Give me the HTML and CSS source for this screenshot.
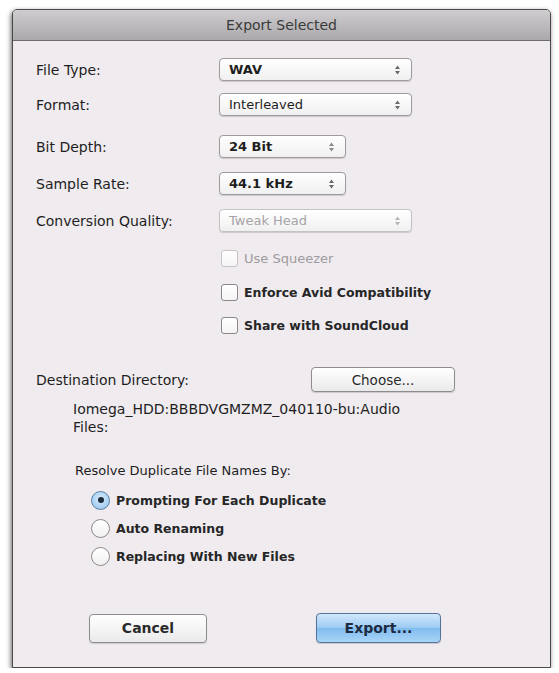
FILE: index.html
```html
<!DOCTYPE html>
<html lang="en">

<head>
    <meta charset="UTF-8">
    <meta name="viewport" content="width=device-width, initial-scale=1.0">
    <title>Export Selected</title>
    <link rel="stylesheet" href="styles.css">
</head>

<body>
    <div class="dialog">
        <div class="titlebar">Export Selected</div>

        <div class="content">
            <div class="row row-first">
                <span class="label">File Type:</span>
                <div class="select wide"><span class="value bold">WAV</span>
                    <svg class="arrows" width="7" height="10" viewBox="0 0 7 10"><path d="M3.5 0.5 L6 4 L1 4 Z M1 6 L6 6 L3.5 9.5 Z" fill="#6a6a6a"/></svg>
                </div>
            </div>
            <div class="row row-format">
                <span class="label">Format:</span>
                <div class="select wide"><span class="value">Interleaved</span>
                    <svg class="arrows" width="7" height="10" viewBox="0 0 7 10"><path d="M3.5 0.5 L6 4 L1 4 Z M1 6 L6 6 L3.5 9.5 Z" fill="#6a6a6a"/></svg>
                </div>
            </div>
            <div class="row row-bit">
                <span class="label">Bit Depth:</span>
                <div class="select narrow"><span class="value bold">24 Bit</span>
                    <svg class="arrows" width="7" height="10" viewBox="0 0 7 10"><path d="M3.5 0.5 L6 4 L1 4 Z M1 6 L6 6 L3.5 9.5 Z" fill="#8a8a8a"/></svg>
                </div>
            </div>
            <div class="row row-gap">
                <span class="label">Sample Rate:</span>
                <div class="select narrow"><span class="value bold">44.1 kHz</span>
                    <svg class="arrows" width="7" height="10" viewBox="0 0 7 10"><path d="M3.5 0.5 L6 4 L1 4 Z M1 6 L6 6 L3.5 9.5 Z" fill="#6a6a6a"/></svg>
                </div>
            </div>
            <div class="row row-gap">
                <span class="label">Conversion Quality:</span>
                <div class="select wide disabled"><span class="value">Tweak Head</span>
                    <svg class="arrows" width="7" height="10" viewBox="0 0 7 10"><path d="M3.5 0.5 L6 4 L1 4 Z M1 6 L6 6 L3.5 9.5 Z" fill="#b4b4b4"/></svg>
                </div>
            </div>

            <div class="check check-first disabled"><span class="box"></span>Use Squeezer</div>
            <div class="check check-second"><span class="box"></span>Enforce Avid Compatibility</div>
            <div class="check check-third"><span class="box"></span>Share with SoundCloud</div>

            <div class="row dest">
                <span class="dest-label">Destination Directory:</span>
                <button class="btn choose">Choose...</button>
            </div>
            <p class="path">Iomega_HDD:BBBDVGMZMZ_040110-bu:Audio Files:</p>

            <p class="resolve">Resolve Duplicate File Names By:</p>
            <div class="radios">
                <div class="radio-row"><span class="radio on"><span class="dot"></span></span>Prompting For Each Duplicate</div>
                <div class="radio-row"><span class="radio"></span>Auto Renaming</div>
                <div class="radio-row"><span class="radio"></span>Replacing With New Files</div>
            </div>

            <div class="actions">
                <button class="btn cancel">Cancel</button>
                <button class="btn export">Export...</button>
            </div>
        </div>
    </div>
</body>

</html>
```

FILE: styles.css
```css
body {
    margin: 0;
    background: #ffffff;
    font-family: "DejaVu Sans", "Liberation Sans", sans-serif;
    color: #1e1e1e;
}

.dialog {
    margin: 9px 0 0 12px;
    width: 539px;
    height: 659px;
    box-sizing: border-box;
    border: 1px solid #4a4a4a;
    border-radius: 5px 5px 0 0;
    background: #efebef;
    box-shadow: -1px 2px 5px rgba(0, 0, 0, 0.6);
    overflow: hidden;
}

.titlebar {
    height: 30px;
    line-height: 30px;
    text-align: center;
    font-size: 14px;
    color: #3a3a3a;
    background: linear-gradient(#cfcdcf, #aaa8aa);
    border-bottom: 1px solid #6e6c6e;
}

.content {
    padding-left: 23px;
}

.row {
    display: flex;
    align-items: center;
    height: 23px;
    font-size: 14px;
}

.row-first {
    margin-top: 17px;
}

.row-format {
    margin-top: 12px;
}

.row-bit {
    margin-top: 19px;
}

.row-gap {
    margin-top: 14px;
}

.label {
    width: 183px;
}

.select {
    position: relative;
    height: 23px;
    box-sizing: border-box;
    border: 1px solid #9c9a9c;
    border-radius: 4px;
    background: linear-gradient(#ffffff, #f1f0f1);
    box-shadow: 0 1px 1px rgba(0, 0, 0, 0.15);
    display: flex;
    align-items: center;
    padding-left: 9px;
}

.wide {
    width: 193px;
}

.narrow {
    width: 127px;
}

.value {
    font-size: 13px;
}

.bold {
    font-weight: bold;
}

.arrows {
    position: absolute;
    right: 10px;
    top: 6px;
}

.select.disabled {
    color: #a6a4a6;
    border-color: #c4c2c4;
}

.check {
    display: flex;
    align-items: center;
    height: 18px;
    padding-left: 185px;
    font-size: 12.5px;
    font-weight: bold;
    color: #262626;
}

.check-first {
    margin-top: 17px;
}

.check-second {
    margin-top: 16px;
}

.check-third {
    margin-top: 15px;
}

.box {
    width: 17px;
    height: 17px;
    box-sizing: border-box;
    border: 1px solid #8a888a;
    border-radius: 3px;
    background: linear-gradient(#ffffff, #f4f4f4);
    margin-right: 6px;
}

.check.disabled {
    color: #9e9c9e;
    font-weight: normal;
    font-size: 13px;
}

.check.disabled .box {
    border-color: #c6c4c6;
}

.dest {
    margin-top: 33px;
    height: 25px;
}

.dest-label {
    width: 275px;
}

.btn {
    font-family: "DejaVu Sans", "Liberation Sans", sans-serif;
    box-sizing: border-box;
    border: 1px solid #8e8c8e;
    border-radius: 4px;
    background: linear-gradient(#ffffff, #ebeaeb);
    box-shadow: 0 1px 1px rgba(0, 0, 0, 0.15);
    color: #2a2a2a;
    padding: 0;
}

.choose {
    width: 144px;
    height: 25px;
    font-size: 13.5px;
}

.path {
    margin: 8px 0 0 37px;
    width: 350px;
    font-size: 14px;
    line-height: 18px;
}

.resolve {
    margin: 26px 0 0 39px;
    font-size: 13px;
    line-height: 18px;
}

.radios {
    margin-top: 6px;
    padding-left: 55px;
}

.radio-row {
    display: flex;
    align-items: center;
    height: 28px;
    font-size: 12.5px;
    font-weight: bold;
    color: #262626;
}

.radio {
    width: 19px;
    height: 19px;
    box-sizing: border-box;
    border: 1px solid #8c8a8c;
    border-radius: 50%;
    background: linear-gradient(#ffffff, #f1f1f1);
    margin-right: 6px;
    display: flex;
    align-items: center;
    justify-content: center;
}

.radio.on {
    border-color: #5b7fa6;
    background: radial-gradient(circle at 50% 40%, #d9ecfc, #8ec1ee);
}

.dot {
    width: 6px;
    height: 6px;
    border-radius: 50%;
    background: #1c2a3a;
}

.actions {
    display: flex;
    align-items: center;
    margin-top: 43px;
    padding-left: 53px;
}

.cancel {
    width: 118px;
    height: 29px;
    font-size: 14px;
    font-weight: bold;
}

.export {
    margin-left: 109px;
    width: 125px;
    height: 30px;
    font-size: 14px;
    font-weight: bold;
    color: #1c2a44;
    border-color: #55739a;
    background: linear-gradient(#d2e7fb, #9bcaf2 50%, #80bbee 51%, #a9d5f7);
}
```
